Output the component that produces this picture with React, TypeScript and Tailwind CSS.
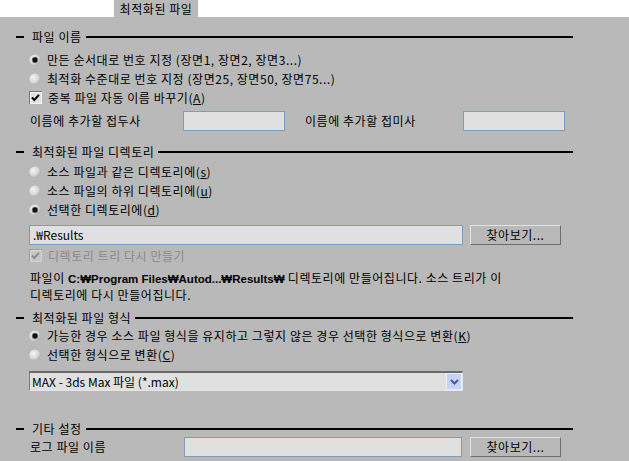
import React from "react";

function Radio({ checked }: { checked?: boolean }) {
  return (
    <svg width="12" height="12" viewBox="0 0 12 12" className="shrink-0">
      <defs>
        <radialGradient id={checked ? "rg1" : "rg0"} cx="0.35" cy="0.35" r="0.75">
          <stop offset="0" stopColor="#f4f4f4" />
          <stop offset="0.6" stopColor="#d8d8d8" />
          <stop offset="1" stopColor="#a4a4a4" />
        </radialGradient>
      </defs>
      <circle cx="6" cy="6" r="5.6" fill={`url(#${checked ? "rg1" : "rg0"})`} />
      {checked && <circle cx="6" cy="6" r="3.2" fill="#7a7a7a" />}
      {checked && <circle cx="6" cy="6" r="2.4" fill="#101010" />}
    </svg>
  );
}

function Check({ disabled }: { disabled?: boolean }) {
  const c = disabled ? "#8c8c8c" : "#000";
  return (
    <svg width="13" height="13" viewBox="0 0 13 13" className="shrink-0">
      <rect x="0" y="0" width="13" height="13" fill={disabled ? "#a0a0a0" : "#7a7a7a"} />
      <rect x="1" y="1" width="12" height="12" fill={disabled ? "#d4d4d4" : "#f2f2f2"} />
      <rect x="2" y="2" width="10" height="10" fill={disabled ? "#c6c6c6" : "#e2e2e2"} />
      <path d="M3 6.5 L5.3 9 L10 3.8" stroke={c} strokeWidth="2" fill="none" />
    </svg>
  );
}

function Header({ title, className }: { title: string; className?: string }) {
  return (
    <div className={"flex items-center h-[16px] pl-[16px] pr-[56px] " + (className || "")}>
      <div className="w-[8px] h-[2px] bg-black" />
      <span className="ml-[8px] mr-[4px] whitespace-nowrap">{title}</span>
      <div className="flex-1 h-[2px] bg-black" />
    </div>
  );
}

function RadioRow({ checked, children }: { checked?: boolean; children: React.ReactNode }) {
  return (
    <div className="flex items-center h-[19px] pl-[29px]">
      <Radio checked={checked} />
      <span className="ml-[6px] whitespace-nowrap">{children}</span>
    </div>
  );
}

function Acc({ k }: { k: string }) {
  return (
    <span>
      (<span className="underline underline-offset-[1px]">{k}</span>)
    </span>
  );
}

function Button({ label }: { label: string }) {
  return (
    <div className="w-[91px] h-[20px] flex items-center justify-center border border-t-[#e2e2e2] border-l-[#e2e2e2] border-r-[#6c6c6c] border-b-[#6c6c6c] bg-[#b9b9b9]">
      {label}
    </div>
  );
}

export default function App() {
  return (
    <div className="w-[629px] h-[461px] flex flex-col text-[12px] leading-none tracking-[0.55px] text-black font-['Noto_Sans_CJK_KR','Liberation_Sans',sans-serif] bg-white overflow-hidden">
      <div className="h-[17px] flex shrink-0">
        <div className="ml-[114px] w-[84px] h-[17px] bg-[#b9b9b9] flex items-center justify-center leading-[15px]">
          최적화된 파일
        </div>
      </div>
      <div className="flex-1 bg-[#b9b9b9] flex flex-col">
        <Header title="파일 이름" className="mt-[12px]" />
        <div className="mt-[5px]">
          <RadioRow checked>만든 순서대로 번호 지정 (장면1, 장면2, 장면3...)</RadioRow>
          <RadioRow>최적화 수준대로 번호 지정 (장면25, 장면50, 장면75...)</RadioRow>
          <div className="flex items-center h-[19px] pl-[29px]">
            <Check />
            <span className="ml-[6px]">
              중복 파일 자동 이름 바꾸기<Acc k="A" />
            </span>
          </div>
        </div>
        <div className="flex items-center h-[20px] mt-[4px]">
          <span className="ml-[30px] w-[153px]">이름에 추가할 접두사</span>
          <div className="w-[102px] h-[20px] bg-[#e0e0e0] border border-[#7f9db9]" />
          <span className="ml-[20px] w-[158px]">이름에 추가할 접미사</span>
          <div className="w-[102px] h-[20px] bg-[#e0e0e0] border border-[#7f9db9]" />
        </div>

        <Header title="최적화된 파일 디렉토리" className="mt-[13px]" />
        <div className="mt-[2px]">
          <RadioRow>
            소스 파일과 같은 디렉토리에<Acc k="s" />
          </RadioRow>
          <RadioRow>
            소스 파일의 하위 디렉토리에<Acc k="u" />
          </RadioRow>
          <RadioRow checked>
            선택한 디렉토리에<Acc k="d" />
          </RadioRow>
        </div>
        <div className="flex items-center h-[20px] mt-[6px]">
          <div className="ml-[29px] w-[434px] h-[20px] bg-[#e0e0e0] border border-[#7f9db9] flex items-center pl-[3px] tracking-normal">
            .₩Results
          </div>
          <div className="ml-[7px]">
            <Button label="찾아보기..." />
          </div>
        </div>
        <div className="flex items-center h-[19px] pl-[29px] mt-[1px]">
          <Check disabled />
          <span className="ml-[6px] text-[#8a8a8a]">디렉토리 트리 다시 만들기</span>
        </div>
        <div className="mt-[5px] pl-[30px] leading-[15px]">
          <div className="whitespace-nowrap">
            파일이 <span className="font-bold font-['Liberation_Sans','Noto_Sans_CJK_KR',sans-serif] text-[11.5px] tracking-normal">C:₩Program Files₩Autod...₩Results₩</span> 디렉토리에 만들어집니다. 소스 트리가 이
          </div>
          <div>디렉토리에 다시 만들어집니다.</div>
        </div>

        <Header title="최적화된 파일 형식" className="mt-[8px]" />
        <div>
          <RadioRow checked>
            가능한 경우 소스 파일 형식을 유지하고 그렇지 않은 경우 선택한 형식으로 변환<Acc k="K" />
          </RadioRow>
          <RadioRow>
            선택한 형식으로 변환<Acc k="C" />
          </RadioRow>
        </div>
        <div className="flex mt-[7px] pl-[29px]">
          <div className="w-[434px] h-[20px] bg-[#e0e0e0] border-t-2 border-l border-t-[#6a6a6a] border-l-[#7a7a7a] border-r border-b border-r-[#e6e6e6] border-b-[#e6e6e6] flex items-center">
            <span className="flex-1 pl-[2px] tracking-normal">MAX - 3ds Max 파일 (*.max)</span>
            <div className="w-[16px] h-[17px] bg-[#c4d4f9] border border-[#e8eeff] flex items-center justify-center">
              <svg width="9" height="6" viewBox="0 0 9 6">
                <path d="M1 1 L4.5 4.5 L8 1" stroke="#4b5f86" strokeWidth="2" fill="none" />
              </svg>
            </div>
          </div>
        </div>

        <Header title="기타 설정" className="mt-[30px]" />
        <div className="flex items-center h-[20px]">
          <span className="ml-[30px] w-[154px]">로그 파일 이름</span>
          <div className="w-[278px] h-[20px] bg-[#e0e0e0] border border-[#7f9db9]" />
          <div className="ml-[8px]">
            <Button label="찾아보기..." />
          </div>
        </div>
      </div>
    </div>
  );
}
